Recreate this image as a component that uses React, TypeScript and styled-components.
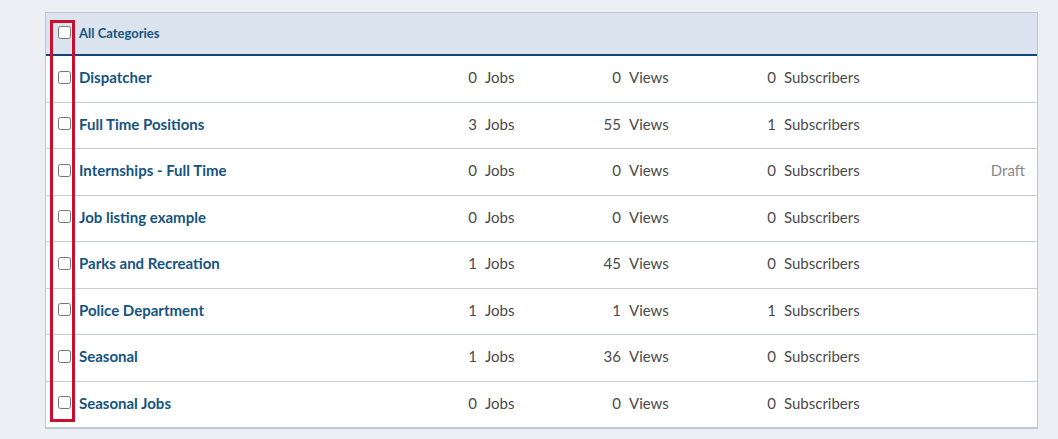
import styled, { createGlobalStyle } from "styled-components";

const Global = createGlobalStyle`
  body {
    margin: 0;
    background: #eceff3;
    font-family: Lato, "Noto Sans", sans-serif;
  }
`;

const Page = styled.div`
  padding: 12px 22px 8px 45px;
`;

const Table = styled.div`
  position: relative;
  width: 991px;
  background: #fff;
  border: 1px solid #b9c6d4;
`;

const Header = styled.div`
  display: flex;
  align-items: center;
  height: 43px;
  padding-bottom: 2px;
  box-sizing: border-box;
  background: #dae3ee;
  border-bottom: 2px solid #0e4877;
`;

const Row = styled.div`
  display: flex;
  align-items: center;
  height: 45.5px;
  padding-bottom: 3px;
  box-sizing: content-box;
  height: 42.5px;
  border-bottom: 1px solid #c3ceda;
  &:last-child {
    border-bottom: none;
  }
`;

const CheckCell = styled.div`
  width: 33px;
  display: flex;
  justify-content: center;
  padding-left: 3px;
  box-sizing: border-box;
`;

const Box = styled.input`
  width: 13px;
  height: 13px;
  margin: 0;
`;

const Title = styled.div<{ $small?: boolean }>`
  width: 360px;
  color: #155381;
  font-weight: 700;
  font-size: ${(p) => (p.$small ? "13px" : "15px")};
`;

const Stat = styled.div<{ $w: number }>`
  width: 150px;
  display: flex;
  font-size: 15px;
  color: #4a4a4a;
  & > span:first-child {
    width: ${(p) => p.$w}px;
    text-align: right;
  }
  & > span:last-child {
    margin-left: 8px;
  }
`;

const Status = styled.div`
  flex: 1;
  text-align: right;
  padding-right: 12px;
  font-size: 15px;
  color: #8a8a8a;
`;

const Highlight = styled.div`
  position: absolute;
  left: 4px;
  top: 7px;
  width: 19px;
  height: 396px;
  border: 3px solid #c8102e;
  pointer-events: none;
`;

const rows = [
  ["Dispatcher", 0, 0, 0, ""],
  ["Full Time Positions", 3, 55, 1, ""],
  ["Internships - Full Time", 0, 0, 0, "Draft"],
  ["Job listing example", 0, 0, 0, ""],
  ["Parks and Recreation", 1, 45, 0, ""],
  ["Police Department", 1, 1, 1, ""],
  ["Seasonal", 1, 36, 0, ""],
  ["Seasonal Jobs", 0, 0, 0, ""],
] as const;

export default function App() {
  return (
    <Page>
      <Global />
      <Table>
        <Header>
          <CheckCell><Box type="checkbox" /></CheckCell>
          <Title $small>All Categories</Title>
        </Header>
        {rows.map(([name, jobs, views, subs, status]) => (
          <Row key={name}>
            <CheckCell><Box type="checkbox" /></CheckCell>
            <Title>{name}</Title>
            <Stat $w={38}><span>{jobs}</span><span>Jobs</span></Stat>
            <Stat $w={32}><span>{views}</span><span>Views</span></Stat>
            <Stat $w={37}><span>{subs}</span><span>Subscribers</span></Stat>
            <Status>{status}</Status>
          </Row>
        ))}
        <Highlight />
      </Table>
    </Page>
  );
}
